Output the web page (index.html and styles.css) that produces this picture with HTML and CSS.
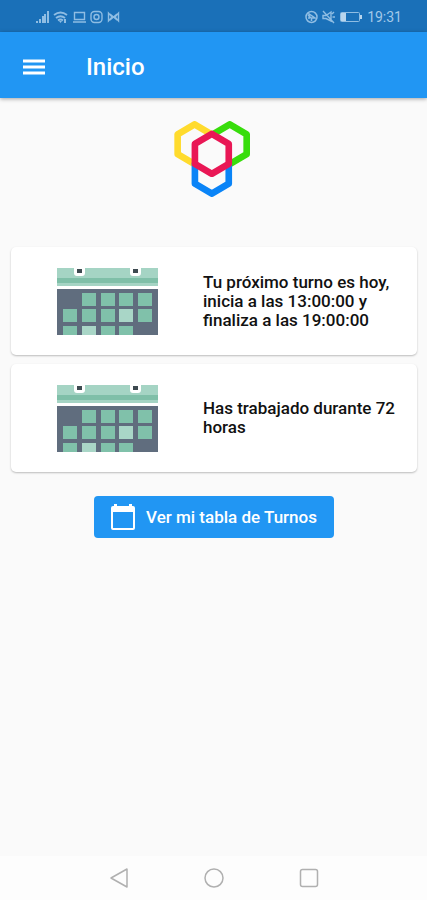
FILE: index.html
```html
<!DOCTYPE html>
<html lang="es">
<head>
<meta charset="utf-8">
<meta name="viewport" content="width=device-width, initial-scale=1">
<title>Inicio</title>
<link rel="stylesheet" href="styles.css">
</head>
<body>
<svg class="defs" width="0" height="0" aria-hidden="true">
  <symbol id="calendar" viewBox="0 0 101 67">
    <path fill="#a5d4c4" d="M0 0h101v18H0z"/>
    <path fill="#7fbfa8" d="M0 10h101v5H0z"/>
    <path fill="#fff" d="M17 0h11v5a3 3 0 0 1-3 3h-5a3 3 0 0 1-3-3zM73 0h11v5a3 3 0 0 1-3 3h-5a3 3 0 0 1-3-3z"/>
    <path fill="#3e4a50" d="M20 1h5v4h-5zM76 1h5v4h-5z"/>
    <path fill="#606d7e" d="M0 21h101v46H0z"/>
    <path fill="#80c1aa" d="M25 25h14v13H25zM44 25h14v13H44zM62 25h14v13H62zM81 25h14v13H81zM6 41h14v13H6zM25 41h14v13H25zM44 41h14v13H44zM81 41h14v13H81zM6 58h14v9H6zM44 58h14v9H44zM62 58h14v9H62z"/>
    <path fill="#a9d6c7" d="M62 41h14v13H62zM25 58h14v9H25z"/>
  </symbol>
</svg>
<div class="screen">
  <div class="status">
    <div class="status-group">
      <svg width="13" height="14" viewBox="0 0 13 14" fill="#8fbde3"><path d="M0 11h2v2H0zM3 9h2v4H3zM6 6h2v7H6zM8 4h2v9H8zM11 1h2v12h-2z"/></svg>
      <svg width="16" height="14" viewBox="0 0 16 14" fill="none" stroke="#8fbde3" stroke-width="1.800"><path d="M1 5q6.500-5 13 0M3 8q4.500-3.500 9 0M5 10.500q2.500-2 5 0"/><path fill="#8fbde3" stroke="none" d="M6 11h3l-1.500 2zM11 9h2v4h-2z"/></svg>
      <svg width="13" height="14" viewBox="0 0 13 14" fill="none" stroke="#8fbde3" stroke-width="1.400"><path d="M1.500 2.500h10v7h-10zM0 12h13"/></svg>
      <svg width="13" height="14" viewBox="0 0 13 14" fill="none" stroke="#8fbde3" stroke-width="1.400"><rect x="1" y="1.500" width="11" height="11" rx="3.500"/><circle cx="6.500" cy="7" r="2.500"/></svg>
      <svg width="13" height="14" viewBox="0 0 13 14" fill="none" stroke="#8fbde3" stroke-width="1.400"><path d="M1.500 3v8l3.500-4zM11.500 3v8L8 7zM3 4l3.500 3L10 4M3 10l3.500-3 3.500 3"/></svg>
    </div>
    <div class="status-group">
      <svg width="13" height="14" viewBox="0 0 13 14" fill="none" stroke="#8fbde3" stroke-width="1.500"><circle cx="6.500" cy="7" r="5.500"/><path d="M4 9V4l6 4H6.500v3M3 5l3 3"/></svg>
      <svg width="13" height="14" viewBox="0 0 13 14" fill="none" stroke="#8fbde3" stroke-width="1.400"><path d="M1 5.500h3L9 2v9L4 8.500H1zM1 1l11 12M10 4l2-2M10.500 7H13"/></svg>
      <svg width="24" height="14" viewBox="0 0 24 14" fill="none" stroke="#8fbde3"><rect x="1.500" y="2.500" width="19" height="9" rx="1"/><path fill="#b8d5ed" stroke="none" d="M2 3h5v8H2zM21 5h2v4h-2z"/></svg>
      <span class="clock">19:31</span>
    </div>
  </div>
  <header class="appbar">
    <button class="menu" aria-label="Menú">
      <svg width="22" height="16" viewBox="0 0 22 16" fill="#fff"><path d="M0 0.500h22v3H0zM0 6.500h22v3H0zM0 12.500h22v3H0z"/></svg>
    </button>
    <h1 class="title">Inicio</h1>
  </header>
  <main class="content">
    <svg class="logo" width="76" height="76" viewBox="42 33 229 229" fill="none" stroke-width="20" stroke-linejoin="round">
      <path stroke="#ffdb2d" d="M104 43l51 30v60l-51 30-51-30V73z"/>
      <path stroke="#38dd0c" d="M210 43l51 30v60l-51 30-51-30V73z"/>
      <path stroke="#0a84f7" d="M156 132l51 30v60l-51 30-51-30v-60z"/>
      <path fill="#fafafa" stroke="#e91755" d="M156 72l51 30v60l-51 30-51-30v-60z"/>
    </svg>
    <section class="cards">
      <article class="card">
        <svg class="picture" width="101" height="67" aria-hidden="true"><use href="#calendar"/></svg>
        <p class="message">Tu próximo turno es hoy, inicia a las 13:00:00 y finaliza a las 19:00:00</p>
      </article>
      <article class="card">
        <svg class="picture" width="101" height="67" aria-hidden="true"><use href="#calendar"/></svg>
        <p class="message">Has trabajado durante 72 horas</p>
      </article>
    </section>
    <button class="action">
      <svg width="26" height="28" viewBox="0 0 26 28" aria-hidden="true"><path fill="#fff" fill-rule="evenodd" d="M4 1h3v2h12V1h3v2h1a2 2 0 0 1 2 2v20a2 2 0 0 1-2 2H3a2 2 0 0 1-2-2V5a2 2 0 0 1 2-2h1zM3 9v16h20V9z"/></svg>
      Ver mi tabla de Turnos
    </button>
  </main>
  <nav class="navbar">
    <button class="key" aria-label="Atrás"><svg width="20" height="20" viewBox="0 0 20 20"><path d="M18 1v18L2 10z"/></svg></button>
    <button class="key" aria-label="Inicio"><svg width="20" height="20" viewBox="0 0 20 20"><circle cx="10" cy="10" r="9"/></svg></button>
    <button class="key" aria-label="Recientes"><svg width="20" height="20" viewBox="0 0 20 20"><rect x="1.500" y="1.500" width="17" height="17" rx="2"/></svg></button>
  </nav>
</div>
</body>
</html>
```
FILE: styles.css
```css
* {
  box-sizing: border-box;
}

body {
  margin: 0;
  background: #fafafa;
  color: #111;
  font-family: Roboto, "Liberation Sans", sans-serif;
}

button {
  padding: 0;
  border: 0;
  background: none;
  font: inherit;
  cursor: pointer;
}

svg {
  display: block;
  flex: none;
}

.defs {
  position: absolute;
}

.screen {
  display: flex;
  flex-direction: column;
  min-height: 100vh;
}

.status {
  display: flex;
  align-items: center;
  justify-content: space-between;
  height: 32px;
  padding: 2px 25px 0 36px;
  background: #1a70b8;
}

.status-group {
  display: flex;
  align-items: center;
  gap: 4px;
}

.clock {
  color: #a3c9e9;
  font-size: 14px;
  line-height: 16px;
}

.appbar {
  display: flex;
  align-items: center;
  gap: 41px;
  height: 66px;
  padding: 3px 23px 0;
  background: #2196f3;
  box-shadow: 0 1px 4px rgba(0, 0, 0, 0.35);
}

.title {
  margin: 0;
  color: #fff;
  font-size: 24px;
  font-weight: 500;
  line-height: 28px;
}

.content {
  display: flex;
  flex: 1;
  flex-direction: column;
  align-items: center;
  padding: 23px 10px 23px 11px;
}

.logo {
  margin-right: 4px;
}

.cards {
  display: grid;
  gap: 9px;
  width: 100%;
  margin: 50px 0 24px;
}

.card {
  display: grid;
  grid-template-columns: 192px 1fr;
  align-items: center;
  min-height: 108px;
  padding-right: 16px;
  border-radius: 5px;
  background: #fff;
  box-shadow: 0 1px 2px rgba(0, 0, 0, 0.25);
}

.picture {
  justify-self: center;
}

.message {
  margin: 0;
  font-size: 17px;
  font-weight: 500;
  line-height: 19px;
}

.action {
  display: flex;
  align-items: center;
  gap: 10px;
  height: 42px;
  padding: 0 17px 0 16px;
  border-radius: 4px;
  background: #2196f3;
  color: #fff;
  font-size: 17px;
  font-weight: 500;
}

.navbar {
  display: flex;
  align-items: center;
  justify-content: center;
  gap: 75px;
  height: 44px;
  background: #fdfdfd;
}

.key {
  fill: none;
  stroke: #b0b0b0;
  stroke-width: 1.5;
  stroke-linejoin: round;
}
```
